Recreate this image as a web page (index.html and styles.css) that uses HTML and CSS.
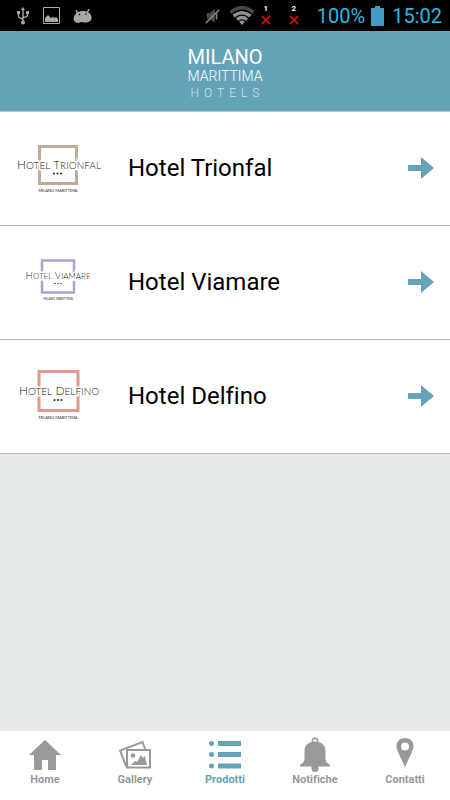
FILE: index.html
```html
<!DOCTYPE html>
<html lang="it">
<head>
<meta charset="utf-8">
<meta name="viewport" content="width=device-width, initial-scale=1">
<title>Milano Marittima Hotels</title>
<link rel="stylesheet" href="styles.css">
</head>
<body>
<div class="status">
  <div class="status-left">
    <svg width="14" height="18" viewBox="0 0 14 18" fill="none" stroke="#a8a8a8" stroke-width="1.4"><path d="M7 2v13M2.500 6v3q0 2 4.500 3M11.500 5v3q0 2-4.500 2.500"/><path d="M7 0l2 3H5z" fill="#a8a8a8" stroke="none"/><circle cx="7" cy="15.500" r="2" fill="#a8a8a8" stroke="none"/><path d="M1 4h3v3H1zM10 4h3v3h-3z" fill="#a8a8a8" stroke="none"/></svg>
    <svg width="17" height="17" viewBox="0 0 17 17"><path d="M.5.500h16v16H.5z" fill="none" stroke="#a8a8a8"/><path d="M2 15v-4l3-3 3 3 2-1 2 1 1-1 2 2v3z" fill="#a8a8a8"/></svg>
    <svg width="20" height="16" viewBox="0 0 20 16"><path d="M3 2l2 4M16 1l-2 4" stroke="#a8a8a8" stroke-width="1.500"/><path d="M1 9c1-4 5-6 9-6s8 2 8.500 6-2 5-5.500 5.500c-2 .5-3-.5-5-.5-2 1.500-6 1-7-1.500C.6 11 .7 10 1 9z" fill="#a8a8a8"/><circle cx="6.500" cy="6.500" r=".8"/><circle cx="13" cy="6" r=".8"/></svg>
  </div>
  <div class="status-right">
    <svg width="16" height="18" viewBox="0 0 18 18"><path d="M2 6h3l6-5v16l-6-5H2z" fill="#4c4c4c"/><path d="M13 5v8M1 17L16 2" fill="none" stroke="#858585" stroke-width="1.700"/></svg>
    <svg width="26" height="20" viewBox="0 0 26 20" fill="none"><path d="M1.500 6.500Q13-3 24.500 6.500" stroke="#484848" stroke-width="3.500"/><path d="M4.500 10q8.500-6.500 17 0M8 13.500q5-4 10 0" stroke="#909090" stroke-width="3.500"/><path d="M10 15.500q3-2 6 0L13 19z" fill="#909090"/></svg>
    <span class="sim"><b>1</b><svg width="10" height="10" viewBox="0 0 10 10"><path d="M1 1l8 8M9 1L1 9" stroke="#c01010" stroke-width="2"/></svg></span>
    <span class="sim sim-second"><b>2</b><svg width="10" height="10" viewBox="0 0 10 10"><path d="M1 1l8 8M9 1L1 9" stroke="#c01010" stroke-width="2"/></svg></span>
    <span class="charge">100%</span>
    <svg width="13" height="20" viewBox="0 0 13 20"><path d="M0 2h4V0h5v2h4v18H0z" fill="#429ac2"/></svg>
    <time class="clock">15:02</time>
  </div>
</div>
<header class="brand">
  <h1 class="logo"><span class="logo-top">MILANO</span><span class="logo-mid">MARITTIMA</span><span class="logo-low">HOTELS</span></h1>
</header>
<main>
  <ul class="hotels">
    <li><a class="hotel" href="#trionfal">
      <svg class="mark" width="90" height="54" viewBox="0 0 90 54" text-anchor="middle" aria-hidden="true"><path d="M25.500 5.500h37v37h-37z" fill="none" stroke="#bdad98" stroke-width="3"/><text class="mark-name" x="45" y="28" font-size="12">H<tspan font-size="10">OTEL</tspan> T<tspan font-size="10">RIONFAL</tspan></text><g fill="#222"><circle cx="40" cy="32.500" r="1"/><circle cx="43.500" cy="32.500" r="1"/><circle cx="47" cy="32.500" r="1"/></g><text class="mark-place" x="44" y="51" font-size="4">MILANO MARITTIMA</text></svg>
      <span class="name">Hotel Trionfal</span>
      <svg class="arrow" width="26" height="22" viewBox="0 0 26 22"><path d="M0 8h13V0l13 11-13 11v-8H0z"/></svg></a></li>
    <li><a class="hotel" href="#viamare">
      <svg class="mark" width="90" height="54" viewBox="0 0 90 54" text-anchor="middle" aria-hidden="true"><path d="M28 5.500h32v32H28z" fill="none" stroke="#b0a0d4" stroke-width="2.500"/><text class="mark-name" x="44" y="24" font-size="10">H<tspan font-size="8">OTEL</tspan> V<tspan font-size="8">IAMARE</tspan></text><g fill="#333"><circle cx="41" cy="28.500" r=".8"/><circle cx="44" cy="28.500" r=".8"/><circle cx="47" cy="28.500" r=".8"/></g><text class="mark-place" x="44" y="45" font-size="3">MILANO MARITTIMA</text></svg>
      <span class="name">Hotel Viamare</span>
      <svg class="arrow" width="26" height="22" viewBox="0 0 26 22"><path d="M0 8h13V0l13 11-13 11v-8H0z"/></svg></a></li>
    <li><a class="hotel" href="#delfino">
      <svg class="mark" width="90" height="54" viewBox="0 0 90 54" text-anchor="middle" aria-hidden="true"><path d="M25 2.500h39v39H25z" fill="none" stroke="#e3988c" stroke-width="3"/><text class="mark-name" x="45" y="26" font-size="12">H<tspan font-size="10">OTEL</tspan> D<tspan font-size="10">ELFINO</tspan></text><g fill="#222"><circle cx="40.500" cy="31" r="1"/><circle cx="44" cy="31" r="1"/><circle cx="47.500" cy="31" r="1"/></g><text class="mark-place" x="44" y="50" font-size="4">MILANO MARITTIMA</text></svg>
      <span class="name">Hotel Delfino</span>
      <svg class="arrow" width="26" height="22" viewBox="0 0 26 22"><path d="M0 8h13V0l13 11-13 11v-8H0z"/></svg></a></li>
  </ul>
</main>
<nav class="tabs">
  <a href="#home"><svg width="34" height="36" viewBox="0 0 34 36"><path d="M17 3L33 18H28V33H20V23H14V33H6V18H1z" fill="currentColor"/></svg>Home</a>
  <a href="#gallery"><svg width="34" height="36" viewBox="0 0 34 36" fill="none" stroke="currentColor" stroke-width="2"><path d="M8.500 30L2 13.500 24.500 5l3 8"/><path d="M9 13h23v17.500H9z"/><circle cx="15" cy="18.500" r="2.200" fill="currentColor" stroke="none"/><path d="M13 28l4-4 2 1 4-7 2 3 2-2 2 9z" fill="currentColor" stroke="none"/></svg>Gallery</a>
  <a class="current" aria-current="page" href="#prodotti"><svg width="34" height="36" viewBox="0 0 34 36" fill="currentColor"><circle cx="3.500" cy="6.500" r="2.500"/><circle cx="3.500" cy="17.500" r="2.500"/><circle cx="3.500" cy="29" r="2.500"/><path d="M10 4h23v5H10zM10 15h23v5H10zM10 26.500h23v5H10z"/></svg>Prodotti</a>
  <a href="#notifiche"><svg width="34" height="36" viewBox="0 0 34 36" fill="currentColor"><circle cx="17" cy="4" r="2.700" fill="none" stroke="currentColor" stroke-width="1.500"/><path d="M17 4.500C23 4.500 27.500 8 27.500 14v8c0 3 2 4 4.500 6v1.500H2V28c2.500-2 4.500-3 4.500-6v-8C6.500 8 11 4.500 17 4.500zM13.500 29h7v2.500a3.500 3.500 0 0 1-7 0z"/></svg>Notifiche</a>
  <a href="#contatti"><svg width="34" height="36" viewBox="0 0 34 36"><path fill-rule="evenodd" d="M17 1C12 1 8.500 4.500 8.500 9c0 6 6 13 8.500 22C19.500 22 25.500 15 25.500 9 25.500 4.500 22 1 17 1zm0 4.500a4 4 0 1 1 0 8 4 4 0 0 1 0-8z" fill="currentColor"/></svg>Contatti</a>
</nav>
</body>
</html>
```
FILE: styles.css
```css
* {
  box-sizing: border-box;
}

body {
  margin: 0;
  min-height: 100vh;
  display: flex;
  flex-direction: column;
  background: #e6eaeb;
  color: #000;
  font-family: Roboto, "Liberation Sans", sans-serif;
  font-variant-ligatures: none;
}

svg {
  display: block;
  flex: none;
}

a {
  color: inherit;
  text-decoration: none;
}

.status {
  display: flex;
  align-items: center;
  justify-content: space-between;
  height: 31px;
  padding: 0 8px 0 16px;
  background: #000;
  color: #33b5e5;
  font-size: 20px;
  line-height: 24px;
}

.status-left {
  display: flex;
  align-items: center;
  gap: 13px;
}

.status-right {
  display: flex;
  align-items: center;
  gap: 8px;
}

.sim {
  display: flex;
  flex-direction: column;
  align-items: center;
  width: 10px;
  margin-left: -2px;
  padding-bottom: 1px;
  color: #fff;
  font-size: 8px;
  line-height: 8px;
  gap: 2px;
}

.sim-second {
  margin: 0 10px;
}

.charge {
  margin-right: -2px;
}

.brand {
  padding: 16px 0 10px;
  background: #65a3b9;
  border-bottom: 1px solid #bcc4c6;
}

.logo {
  display: flex;
  flex-direction: column;
  align-items: center;
  margin: 0;
  color: #fff;
  font-weight: 300;
}

.logo-top {
  font-size: 20px;
  font-weight: 400;
  line-height: 20px;
}

.logo-mid {
  font-size: 14px;
  line-height: 18px;
}

.logo-low {
  padding-left: 5px;
  color: #cfe3ea;
  font-size: 12px;
  line-height: 16px;
  letter-spacing: 5px;
}

main {
  flex: 1;
}

.hotels {
  margin: 0;
  padding: 0;
  list-style: none;
}

.hotel {
  display: flex;
  align-items: center;
  height: 114px;
  padding: 0 16px 2px 14px;
  background: #fff;
  border-bottom: 1px solid #b9bdbd;
}

.mark-name,
.mark-place {
  font-family: Lato, sans-serif;
  fill: #222;
}

.mark-name {
  stroke: #fff;
  font-weight: 300;
  stroke-width: 3px;
  paint-order: stroke;
}

.name {
  flex: 1;
  margin-left: 24px;
  font-size: 24px;
  line-height: 32px;
}

.arrow {
  fill: #65a3b9;
}

.tabs {
  display: grid;
  grid-template-columns: repeat(5, 1fr);
  height: 69px;
  padding-top: 6px;
  background: #fff;
  color: #999;
  font-size: 11px;
  font-weight: 700;
  line-height: 14px;
}

.tabs a {
  display: flex;
  flex-direction: column;
  align-items: center;
}

.tabs .current {
  color: #65a3b9;
}
```
